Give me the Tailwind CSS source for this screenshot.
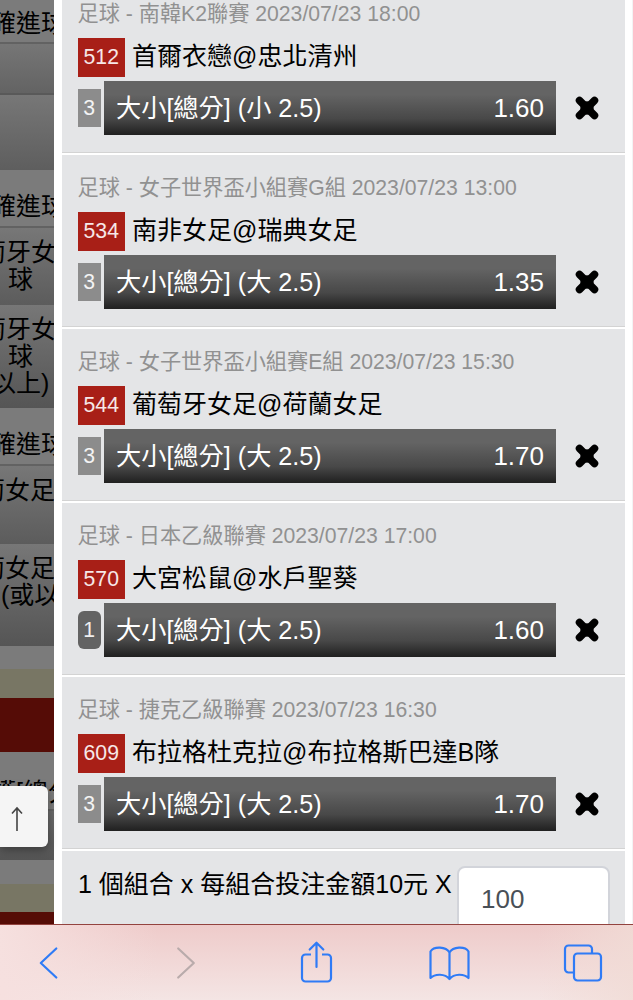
<!DOCTYPE html>
<html lang="zh-Hant">

<head>
    <meta charset="UTF-8">
    <meta name="viewport" content="width=device-width, initial-scale=1.0">
    <title>投注單</title>
    <script src="https://cdn.jsdelivr.net/npm/@tailwindcss/browser@4"></script>
</head>

<body class="h-screen overflow-hidden flex flex-col bg-white font-['Liberation_Sans','Noto_Sans_CJK_TC',sans-serif] text-black">
    <div class="relative flex h-[924px] overflow-hidden shrink-0">
        <!-- Dimmed page behind the bet slip -->
        <div class="w-[54px] shrink-0 overflow-hidden bg-[#7b7b7b] text-[25px] leading-[27px] whitespace-nowrap">
            <div class="h-[44px] border-b-2 border-[#626262] pt-[10px]"><p class="-ml-[9px]">確進球</p></div>
            <div class="h-[51px] border-b-2 border-[#595959] bg-linear-to-b from-[#767676] to-[#636363]"></div>
            <div class="h-[75px] bg-linear-to-b from-[#777777] to-[#5e5e5e]"></div>
            <div class="h-[58px] border-b-2 border-[#626262] pt-[23px]"><p class="-ml-[9px]">確進球</p></div>
            <div class="h-[77px] bg-linear-to-b from-[#777777] to-[#5c5c5c] pt-[11px]">
                <p class="-ml-[19px]">萄牙女</p>
                <p class="ml-[8px]">球</p>
            </div>
            <div class="h-[103px] bg-linear-to-b from-[#777777] to-[#555555] pt-[11px]">
                <p class="-ml-[19px]">萄牙女</p>
                <p class="ml-[8px]">球</p>
                <p class="-ml-[9px]">以上)</p>
            </div>
            <div class="h-[58px] border-b-2 border-[#626262] pt-[23px]"><p class="-ml-[9px]">確進球</p></div>
            <div class="h-[78px] bg-linear-to-b from-[#777777] to-[#5c5c5c] pt-[11px]"><p class="-ml-[20px]">萄女足</p></div>
            <div class="h-[102px] bg-linear-to-b from-[#777777] to-[#555555] pt-[11px]">
                <p class="-ml-[20px]">萄女足</p>
                <p class="ml-[1px]">(或以</p>
            </div>
            <div class="h-[23px] bg-[#7b7b7b]"></div>
            <div class="h-[29px] bg-[#787664]"></div>
            <div class="h-[54px] bg-[#550c06]"></div>
            <div class="h-[59px] border-b-2 border-[#626262] pt-[27px]"><p class="-ml-[9px]">護[總分</p></div>
            <div class="h-[49px] bg-linear-to-b from-[#6a6a6a] to-[#555555]"></div>
            <div class="h-[24px] bg-[#7b7b7b]"></div>
            <div class="h-[28px] bg-[#787664]"></div>
            <div class="h-[12px] bg-[#550c06]"></div>
        </div>

        <!-- Bet slip -->
        <div class="w-[579px] pl-[8px] pr-[8px] bg-white">
            <div id="bets" class="-mt-[19px]"></div>
            <div class="flex h-[200px] bg-[#e4e5e7] pl-4 pt-[15px]">
                <p class="w-[379px] text-[25px] leading-[36px] whitespace-nowrap">1 個組合 x 每組合投注金額10元 X</p>
                <div class="w-[153px] h-[68px] rounded-lg border-2 border-[#d2d4da] bg-white pl-[22px] pt-[13px] text-[26px] leading-[36px] text-[#495057]">100</div>
            </div>
        </div>
        <div class="absolute right-0 top-0 w-px h-full bg-[#f3f3f3]"></div>

        <!-- Back to top -->
        <div class="absolute left-0 top-[786px] w-[48px] h-[61px] rounded-r-md bg-[#f5f5f5] shadow-[0_3px_10px_rgba(0,0,0,0.35)]">
            <svg class="ml-[11px] mt-[20px]" width="12" height="25" viewBox="0 0 12 25" fill="none" stroke="#444" stroke-width="1.6">
                <path d="M6 25V2M1 7.5L6 2l5 5.5" />
            </svg>
        </div>
    </div>

    <!-- Browser toolbar -->
    <div class="relative h-[76px] shrink-0 border-t border-[#93433f] bg-linear-to-b from-[#eecbca] to-[#f4e5e4]">
        <div class="absolute inset-0 bg-linear-to-r from-[#f6e0df] from-0% to-transparent to-25%"></div>
        <div class="absolute inset-0 bg-linear-to-l from-[#f1dcd6]/80 from-0% to-transparent to-15%"></div>
        <svg class="relative block" width="633" height="75" viewBox="0 925 633 75" fill="none" stroke="#2f7bf6" stroke-width="2.2" stroke-linecap="round" stroke-linejoin="round">
            <path d="M56.300 948.500L40.800 963L56.300 977.500" />
            <path stroke="#b9abab" d="M178.200 948.500L193.800 963L178.200 977.500" />
            <path stroke-linecap="butt" d="M311 954.500h-5.500a3.500 3.500 0 0 0-3.500 3.500v20a3.500 3.500 0 0 0 3.500 3.500h22a3.500 3.500 0 0 0 3.500-3.500v-20a3.500 3.500 0 0 0-3.500-3.500H322" />
            <path d="M316.500 967V943M309.700 949.500l6.800-6.800l6.800 6.800" />
            <path d="M449.500 952.500C446 946.500 434 946 430.500 951.500V978C435 973.500 445 973.500 449.500 979C454 973.500 464 973.500 468.500 978V951.500C465 946 453 946.500 449.500 952.500ZM449.500 952.500V979" />
            <path stroke-linecap="butt" d="M573 972.500h-4.500a3.500 3.500 0 0 1-3.500-3.500v-20a3.500 3.500 0 0 1 3.500-3.500h20a3.500 3.500 0 0 1 3.500 3.500v4.500" />
            <rect x="574" y="953.500" width="27" height="27" rx="3.500" />
        </svg>
    </div>

    <script>
        const bets = [
            { meta: '足球 - 南韓K2聯賽 2023/07/23 18:00', no: '512', name: '首爾衣戀@忠北清州', min: 3, pick: '大小[總分] (小 2.5)', odds: '1.60' },
            { meta: '足球 - 女子世界盃小組賽G組 2023/07/23 13:00', no: '534', name: '南非女足@瑞典女足', min: 3, pick: '大小[總分] (大 2.5)', odds: '1.35' },
            { meta: '足球 - 女子世界盃小組賽E組 2023/07/23 15:30', no: '544', name: '葡萄牙女足@荷蘭女足', min: 3, pick: '大小[總分] (大 2.5)', odds: '1.70' },
            { meta: '足球 - 日本乙級聯賽 2023/07/23 17:00', no: '570', name: '大宮松鼠@水戶聖葵', min: 1, pick: '大小[總分] (大 2.5)', odds: '1.60' },
            { meta: '足球 - 捷克乙級聯賽 2023/07/23 16:30', no: '609', name: '布拉格杜克拉@布拉格斯巴達B隊', min: 3, pick: '大小[總分] (大 2.5)', odds: '1.70' },
        ];

        let html = '';
        bets.forEach((bet) => {
            // single bets get the darker rounded badge
            const badge = bet.min === 1 ? 'rounded-md bg-[#636363]' : 'bg-[#8c8c8c]';
            html += `
                <div class="h-[174px] bg-[#e4e5e7] border-b-2 border-white shadow-[inset_0_-1px_0_#d3d3d3] pl-[15.5px] pt-[18px] whitespace-nowrap">
                    <p class="h-[39px] text-[21.2px] leading-[30px] text-[#919191]">${bet.meta}</p>
                    <div class="flex h-[39px]">
                        <span class="w-[47.5px] h-[39px] bg-[#a81f17] text-center text-[21.2px] leading-[38px] text-white/90">${bet.no}</span>
                        <span class="ml-[7px] text-[25px] leading-[36px]">${bet.name}</span>
                    </div>
                    <div class="flex items-center h-[54px] mt-1">
                        <span class="w-[23.5px] h-[38px] ${badge} text-center text-[21.2px] leading-[37px] text-white/90">${bet.min}</span>
                        <div class="flex justify-between w-[452px] h-[54px] ml-[3px] px-3 bg-linear-to-b from-[#646464] from-25% via-[#484848] via-70% to-[#202020] text-[25.2px] leading-[54px] text-white">
                            <span>${bet.pick}</span>
                            <span class="text-[26px]">${bet.odds}</span>
                        </div>
                        <svg class="ml-[19px]" width="24" height="24" viewBox="0 0 24 24" stroke="#000" stroke-width="7.500" stroke-linecap="round">
                            <path d="M4.500 4.500L19.500 19.500M19.500 4.500L4.500 19.500" />
                            <circle cx="12" cy="12" r="3" />
                        </svg>
                    </div>
                </div>
            `;
        });
        document.getElementById('bets').innerHTML = html;
    </script>
</body>

</html>
